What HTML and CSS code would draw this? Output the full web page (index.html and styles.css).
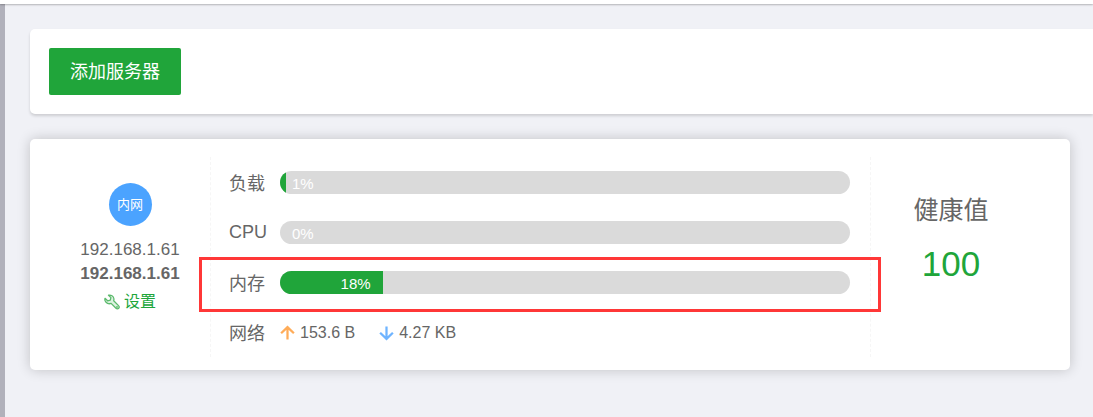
FILE: index.html
```
<!DOCTYPE html>
<html lang="zh-CN">
  <head>
    <meta charset="UTF-8">
    <meta name="viewport" content="width=device-width, initial-scale=1.0">
    <link rel="stylesheet" href="styles.css">
    <title>服务器</title>
  </head>
  <body>
    <header class="topbar"></header>
    <div class="page">
      <aside class="sidebar"></aside>
      <main class="content">
        <div class="toolbar">
          <button type="button" class="add-btn">添加服务器</button>
        </div>
        <section class="server">
          <div class="server-info">
            <span class="badge">内网</span>
            <span class="ip">192.168.1.61</span>
            <strong class="ip">192.168.1.61</strong>
            <a href="#" class="setting">
              <svg width="16" height="16" viewBox="0 0 16 16" fill="#dcf2e0" stroke="#5cba6d" stroke-width="1.3" stroke-linejoin="round">
                <path d="M4.500 1.200C7 .6 9.600 2.200 9.900 4.800c.1.700 0 1.300-.2 1.900l4.800 4.900c.8.800.9 1.900.2 2.700s-1.900.8-2.700 0L7.100 9.400C4.700 10.300 2 9.200 1.100 6.800.8 5.900.8 5.100 1 4.300l2.600 2.500 2.700-.7.600-2.500z"/>
                <circle cx="13" cy="13" r=".3"/>
              </svg>
              <span>设置</span>
            </a>
          </div>
          <div class="metrics">
            <div class="row">
              <span class="label">负载</span>
              <div class="bar"><div class="fill" style="width: 1%"></div><span class="percent low">1%</span></div>
            </div>
            <div class="row">
              <span class="label">CPU</span>
              <div class="bar"><div class="fill" style="width: 0%"></div><span class="percent low">0%</span></div>
            </div>
            <div class="row marked">
              <span class="label">内存</span>
              <div class="bar"><div class="fill" style="width: 18%"><span class="percent">18%</span></div></div>
            </div>
            <div class="row">
              <span class="label">网络</span>
              <span class="net up">
                <svg width="15" height="16" viewBox="0 0 16 16" fill="none" stroke="#ffac59" stroke-width="2.400">
                  <path d="M8 15V2M1.200 8.300L8 1.700l6.800 6.600"/>
                </svg>
                153.6 B
              </span>
              <span class="net">
                <svg width="15" height="16" viewBox="0 0 16 16" fill="none" stroke="#6fb4ff" stroke-width="2.400">
                  <path d="M8 1v13M1.200 7.700L8 14.300l6.800-6.600"/>
                </svg>
                4.27 KB
              </span>
            </div>
          </div>
          <div class="health">
            <span class="health-title">健康值</span>
            <span class="health-value">100</span>
          </div>
        </section>
      </main>
    </div>
  </body>
</html>
```
FILE: styles.css
```
* {
  box-sizing: border-box;
}

body {
  display: flex;
  flex-direction: column;
  min-height: 100vh;
  margin: 0;
  background-color: #f0f1f6;
  color: #666;
  font-family: "Liberation Sans", "Noto Sans CJK SC", sans-serif;
}

.topbar {
  position: relative;
  height: 4px;
  background-color: #fff;
  box-shadow: 0 1px 2px rgba(0, 0, 0, 0.25);
}

.page {
  display: flex;
  flex: 1;
}

.sidebar {
  width: 5px;
  background-color: #b1b1bb;
}

.content {
  flex: 1;
  padding: 25px 0 25px 25px;
}

.toolbar {
  padding: 19px;
  background-color: #fff;
  border-radius: 5px 0 0 5px;
  box-shadow: 0 2px 3px rgba(0, 0, 0, 0.15);
}

.add-btn {
  display: block;
  height: 47px;
  padding: 0 21px 4px;
  background-color: #20a53a;
  color: #fff;
  border: none;
  border-radius: 2px;
  cursor: pointer;
  font-family: inherit;
  font-size: 18px;
}

.server {
  display: flex;
  margin: 25px 23px 0 0;
  padding: 18px 39px 13px 20px;
  background-color: #fff;
  border-radius: 5px;
  box-shadow: 0 0 13px rgba(0, 0, 0, 0.2);
}

.server-info {
  display: flex;
  flex-direction: column;
  align-items: center;
  width: 160px;
  padding-top: 26px;
}

.badge {
  width: 43px;
  height: 43px;
  margin-bottom: 12px;
  border-radius: 50%;
  background-color: #4ba3ff;
  color: #fff;
  font-size: 13px;
  line-height: 43px;
  text-align: center;
}

.ip {
  font-size: 17px;
  line-height: 24px;
}

.setting {
  display: flex;
  align-items: center;
  gap: 4px;
  margin-top: 4px;
  color: #20a53a;
  font-size: 16px;
  line-height: 24px;
  text-decoration: none;
}

.metrics {
  flex: 1;
  padding: 0 20px 0 18px;
  border: 1px dashed #f6f6f6;
  border-width: 0 1px;
}

.row {
  position: relative;
  display: flex;
  align-items: center;
  height: 50px;
}

/* red frame round the memory row */
.marked::after {
  content: "";
  position: absolute;
  top: 0;
  right: -31px;
  bottom: -5px;
  left: -30px;
  border: 3px solid #ff3737;
}

.label {
  width: 51px;
  font-size: 18px;
}

.bar {
  position: relative;
  flex: 1;
  height: 23px;
  overflow: hidden;
  border-radius: 12px;
  background-color: #dadada;
  color: #fff;
  font-size: 15px;
  line-height: 25px;
}

.fill {
  height: 100%;
  background-color: #20a53a;
  text-align: right;
}

.percent {
  padding-right: 12px;
}

/* too little fill to hold its own text */
.low {
  position: absolute;
  top: 0;
  left: 12px;
}

.net {
  display: flex;
  align-items: center;
  gap: 5px;
  padding-top: 1px;
  font-size: 16px;
}

.up {
  margin-right: 24px;
}

.health {
  display: flex;
  flex-direction: column;
  align-items: center;
  width: 160px;
  padding-top: 33px;
}

.health-title {
  font-size: 25px;
  line-height: 40px;
}

.health-value {
  margin-top: 10px;
  color: #20a53a;
  font-size: 35px;
  line-height: 48px;
}
```
